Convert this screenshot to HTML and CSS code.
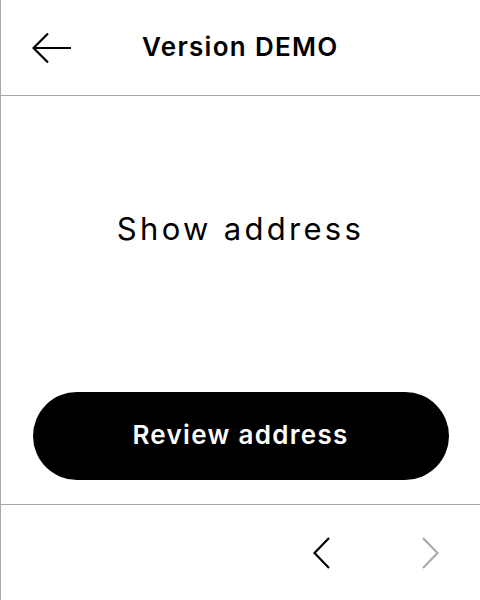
FILE: index.html
```html
<!DOCTYPE html>
<html>
<head>
<meta charset="utf-8">
<link rel="stylesheet" href="styles.css">
</head>
<body>
<div class="screen">
  <header class="header">
    <button class="back" aria-label="Back">
      <svg width="40" height="32" viewBox="0 0 40 32"><path d="M39 16H2M16 1.5L1.5 16L16 30.5" fill="none" stroke="#000" stroke-width="2.2"/></svg>
    </button>
    <h1 class="title">Version DEMO</h1>
  </header>
  <main class="content">
    <p class="message">Show address</p>
    <button class="primary">Review address</button>
  </main>
  <footer class="footer">
    <button class="nav" aria-label="Previous">
      <svg width="18" height="32" viewBox="0 0 18 32"><path d="M16 1L1.5 16L16 31" fill="none" stroke="#000" stroke-width="2.2"/></svg>
    </button>
    <button class="nav disabled" aria-label="Next">
      <svg width="18" height="32" viewBox="0 0 18 32"><path d="M2 1L16.5 16L2 31" fill="none" stroke="#aaa" stroke-width="2.2"/></svg>
    </button>
  </footer>
</div>
</body>
</html>
```
FILE: styles.css
```css
* { box-sizing: border-box; }
html, body { margin: 0; padding: 0; background: #fff; }
body { font-family: Inter, "Noto Sans", sans-serif; color: #000; }
.screen {
  width: 480px; height: 600px;
  border-left: 1px solid #a8a8a8;
  display: flex; flex-direction: column;
}
.header {
  height: 96px; flex: none;
  border-bottom: 1px solid #a8a8a8;
  display: flex; align-items: center;
  padding-left: 31px; padding-bottom: 3px;
}
.back { background: none; border: 0; padding: 0; display: flex; margin-top: 3px; }
.title {
  margin: 0 0 0 70px;
  font-size: 26px; font-weight: 600; letter-spacing: 1.3px;
}
.content {
  flex: 1; display: flex; flex-direction: column; align-items: center;
  padding: 0 31px 24px;
}
.message {
  margin: 0; flex: 1; display: flex; align-items: center;
  font-size: 31px; font-weight: 400; letter-spacing: 3.3px;
  padding-bottom: 32px;
}
.primary {
  width: 416px; height: 88px; border: 0; border-radius: 44px;
  background: #000; color: #fff; font-family: inherit;
  font-size: 26px; font-weight: 600; letter-spacing: 1.3px;
  padding: 0 0 4px;
}
.footer {
  height: 96px; flex: none;
  border-top: 1px solid #a8a8a8;
  display: flex; justify-content: flex-end; align-items: center;
  gap: 90px; padding-right: 41px;
}
.nav { background: none; border: 0; padding: 0; display: flex; }
```
